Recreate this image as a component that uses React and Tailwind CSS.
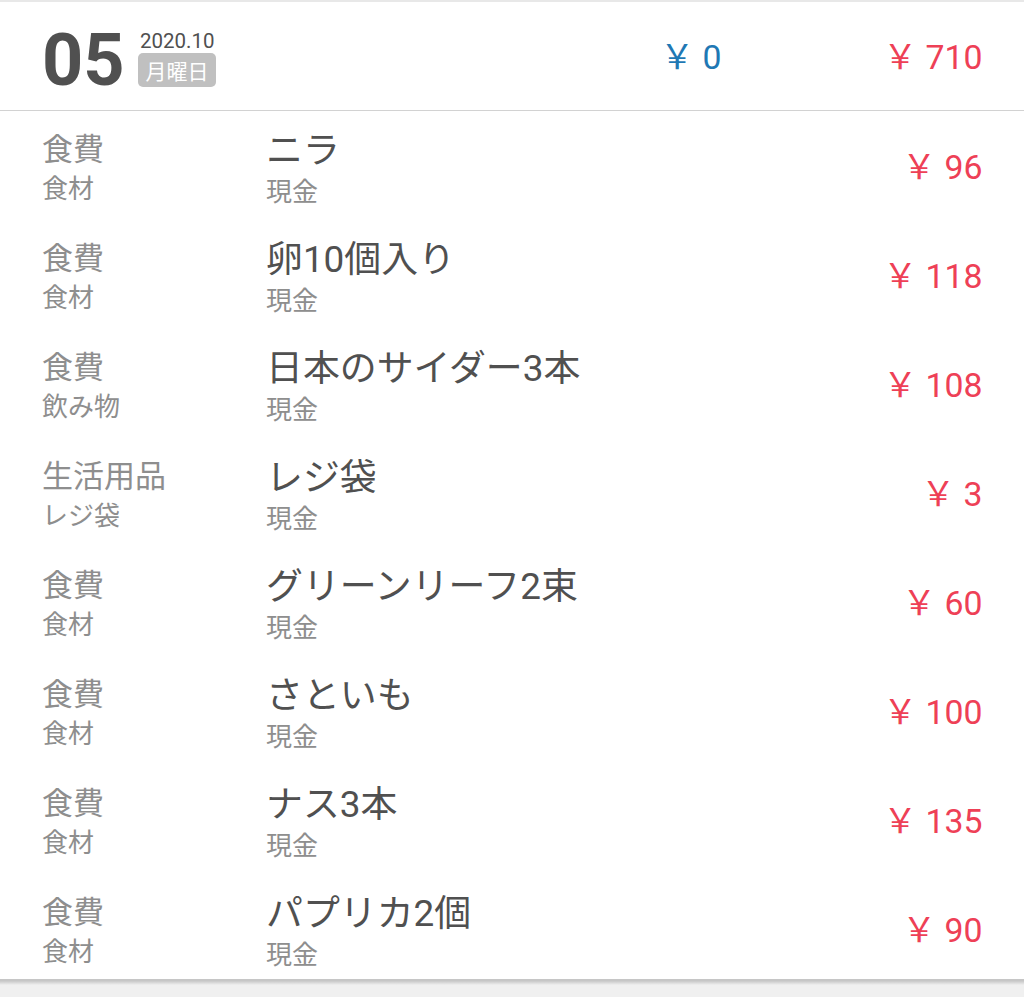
import React from 'react';

const day = {
  date: '05',
  month: '2020.10',
  weekday: '月曜日',
  income: '0',
  expense: '710',
};

const entries = [
  { id: 1, category: '食費', sub: '食材', title: 'ニラ', account: '現金', amount: 96 },
  { id: 2, category: '食費', sub: '食材', title: '卵10個入り', account: '現金', amount: 118 },
  { id: 3, category: '食費', sub: '飲み物', title: '日本のサイダー3本', account: '現金', amount: 108 },
  { id: 4, category: '生活用品', sub: 'レジ袋', title: 'レジ袋', account: '現金', amount: 3 },
  { id: 5, category: '食費', sub: '食材', title: 'グリーンリーフ2束', account: '現金', amount: 60 },
  { id: 6, category: '食費', sub: '食材', title: 'さといも', account: '現金', amount: 100 },
  { id: 7, category: '食費', sub: '食材', title: 'ナス3本', account: '現金', amount: 135 },
  { id: 8, category: '食費', sub: '食材', title: 'パプリカ2個', account: '現金', amount: 90 },
];

const Yen = ({ value, className }) => (
  <p className={`text-[33.8px] leading-10 whitespace-pre text-right ${className}`}>
    ￥ {value}
  </p>
);

const DayHeader = () => (
  <header className="flex h-[111px] items-start border-t-2 border-b border-t-[#e8e8e8] border-b-[#d2d2d2] pl-[42px] pr-[41.5px]">
    <h1 className="w-24 pt-[19px] text-[72px] leading-20 font-bold text-[#505050]">{day.date}</h1>
    <div className="w-[120px] pt-[27px]">
      <p className="pl-0.5 text-[20.5px] leading-6 text-[#505050]">{day.month}</p>
      <span className="flex h-[34px] w-[78px] items-center justify-center rounded-[5px] bg-[#c0c0c0] pt-1 text-[21px] leading-7 text-white">
        {day.weekday}
      </span>
    </div>
    <div className="flex-1 pt-9">
      <Yen value={day.income} className="text-[#1f78b4]" />
    </div>
    <div className="w-[261px] pt-9">
      <Yen value={day.expense} className="text-[#ee4056]" />
    </div>
  </header>
);

const EntryRow = ({ entry }) => (
  <li className="flex h-[109px] pl-[42px] pr-[41.5px]">
    <div className="w-56 pt-[19px] text-[#8e8e8e]">
      <p className="text-[31px] leading-10">{entry.category}</p>
      <p className="text-[26px] leading-[39px]">{entry.sub}</p>
    </div>
    <div className="flex-1 pt-[18px]">
      <p className="text-[36.9px] leading-11 text-[#505050]">{entry.title}</p>
      <p className="text-[26px] leading-[38px] text-[#8e8e8e]">{entry.account}</p>
    </div>
    <Yen value={entry.amount} className="pt-[37px] text-[#ee4056]" />
  </li>
);

const App = () => {
  return (
    <div className="flex h-[997px] w-[1024px] flex-col overflow-hidden bg-[#f0f0f0] font-[Roboto,'Noto_Sans_CJK_JP',sans-serif]">
      <section className="h-[979px] bg-white">
        <DayHeader />
        <ul>
          {entries.map((entry) => (
            <EntryRow key={entry.id} entry={entry} />
          ))}
        </ul>
      </section>
      {/* card shadow */}
      <div className="h-1.5 bg-linear-to-b from-[#c6c6c6] from-30% to-[#f0f0f0]" />
    </div>
  );
};

export default App;
